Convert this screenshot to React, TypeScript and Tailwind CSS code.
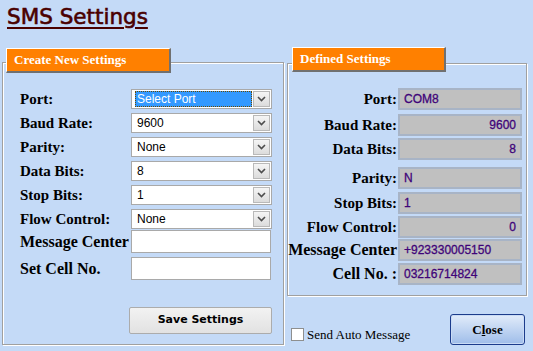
import React from 'react';

// SMS Settings dialog (WinForms style)

const serif = { fontFamily: '"Liberation Serif", "Times New Roman", serif' };
const sans = { fontFamily: '"Liberation Sans", Arial, sans-serif' };

function Chevron() {
  return (
    <svg width="9" height="6" viewBox="0 0 9 6">
      <polyline points="1,1 4.5,4.5 8,1" fill="none" stroke="#4d4d4d" strokeWidth="1.6" />
    </svg>
  );
}

function Select({ value, focused }: { value: string; focused?: boolean }) {
  return (
    <div className="flex h-[20px] w-[141px] items-center border border-[#a9a9a9] bg-white p-[1px]">
      <div className="flex h-full flex-1 items-center pr-[1px] pl-[2px]">
        {focused ? (
          <div className="flex h-full w-full items-center bg-[#3399ff] pl-[2px] text-white outline-1 outline-dotted outline-[#6b4a00] -outline-offset-1">
            {value}
          </div>
        ) : (
          <span className="pl-[2px] text-black">{value}</span>
        )}
      </div>
      <div className="flex h-[16px] w-[17px] items-center justify-center border border-[#b9b9b9] bg-gradient-to-b from-[#f5f5f5] to-[#dcdcdc]">
        <Chevron />
      </div>
    </div>
  );
}

function TextBox() {
  return <div className="h-[23px] w-[140px] border border-[#a9a9a9] bg-white" />;
}

function Tab({ label, className }: { label: string; className: string }) {
  return (
    <div
      className={`relative z-10 flex h-[25px] items-center border-t border-l border-white border-r-2 border-b-2 border-r-[#707070] border-b-[#707070] bg-[#ff8000] pl-[7px] text-[13px] font-bold text-white ${className}`}
      style={serif}
    >
      {label}
    </div>
  );
}

function Field({ value, right }: { value: string; right?: boolean }) {
  return (
    <div
      className={`flex h-[22px] w-[124px] items-center border-2 border-[#a8b4c6] bg-[#c0c0c0] px-[4px] text-[12px] text-[#3f0479] [-webkit-text-stroke:0.3px_#3f0479] ${right ? 'justify-end' : ''}`}
      style={sans}
    >
      {value}
    </div>
  );
}

export default function App() {
  const leftRows: [string, React.ReactNode][] = [
    ['Port:', <Select value="Select Port" focused />],
    ['Baud Rate:', <Select value="9600" />],
    ['Parity:', <Select value="None" />],
    ['Data Bits:', <Select value="8" />],
    ['Stop Bits:', <Select value="1" />],
    ['Flow Control:', <Select value="None" />],
  ];

  const rightRows: [string, string, boolean, string, boolean?][] = [
    ['Port:', 'COM8', false, 'mt-0'],
    ['Baud Rate:', '9600', true, 'mt-[4px]'],
    ['Data Bits:', '8', true, 'mt-[2px]'],
    ['Parity:', 'N', false, 'mt-[7px]'],
    ['Stop Bits:', '1', false, 'mt-[3px]'],
    ['Flow Control:', '0', true, 'mt-[2px]'],
    ['Message Center', '+923330005150', false, 'mt-[1px]', true],
    ['Cell No. :', '03216714824', false, 'mt-[2px]', true],
  ];

  return (
    <div className="h-[351px] w-[533px] overflow-hidden bg-[#c4daf7] text-[12px]" style={sans}>
      {/* Title */}
      <div className="h-[47px] pt-[3px] pl-[7px]">
        <span
          className="text-[21.5px] leading-[28px] text-[#4a0000] underline decoration-2 underline-offset-[3px] [-webkit-text-stroke:0.6px_#4a0000]"
          style={{ fontFamily: '"Comic Sans MS", "DejaVu Sans", sans-serif' }}
        >
          SMS Settings
        </span>
      </div>

      <div className="flex">
        {/* Create New Settings */}
        <div className="ml-[2px] flex w-[282px] flex-col">
          <Tab label="Create New Settings" className="mt-[1px] ml-[4px] w-[165px]" />
          <div className="-mt-[11px] flex h-[283px] flex-col border border-[#a0a0a0] pt-[26px] pl-[17px] shadow-[inset_1px_1px_0_#ffffff,1px_1px_0_#ffffff]">
            <div className="flex flex-col gap-[4px]">
              {leftRows.map(([label, control]) => (
                <div key={label} className="flex items-center">
                  <div className="w-[111px] text-[15px] leading-[18px] font-bold text-black" style={serif}>
                    {label}
                  </div>
                  {control}
                </div>
              ))}
            </div>
            <div className="mt-[1px] flex items-center">
              <div className="w-[111px] text-[16px] leading-[18px] font-bold" style={serif}>
                Message Center
              </div>
              <TextBox />
            </div>
            <div className="mt-[4px] flex items-center">
              <div className="w-[111px] text-[16px] leading-[18px] font-bold" style={serif}>
                Set Cell No.
              </div>
              <TextBox />
            </div>
            <div className="mt-[27px] ml-[109px]">
              <button
                className="flex h-[27px] w-[143px] items-center justify-center rounded-[2px] border border-[#acacac] bg-gradient-to-b from-[#f2f2f2] to-[#e2e2e2] text-[11px] font-bold text-black"
                style={{ fontFamily: '"Comic Sans MS", "DejaVu Sans", sans-serif' }}
              >
                Save Settings
              </button>
            </div>
          </div>
        </div>

        {/* Defined Settings */}
        <div className="ml-[3px] flex w-[240px] flex-col">
          <Tab label="Defined Settings" className="ml-[5px] w-[154px]" />
          <div className="-mt-[9px] flex h-[233px] flex-col border border-[#a0a0a0] pt-[24px] shadow-[inset_1px_1px_0_#ffffff,1px_1px_0_#ffffff]">
            {rightRows.map(([label, value, right, mt, big]) => (
              <div key={label} className={`flex items-center ${mt}`}>
                <div
                  className={`w-[110px] pr-[1px] text-right leading-[18px] font-bold whitespace-nowrap ${big ? 'text-[16px]' : 'text-[15px]'}`}
                  style={serif}
                >
                  {label}
                </div>
                <Field value={value} right={right} />
              </div>
            ))}
          </div>
          <div className="mt-[18px] flex items-end justify-between pr-[2px] pl-[4px]">
            <label className="mb-[1px] flex items-center gap-[3px] text-[13px] text-black" style={serif}>
              <span className="h-[13px] w-[13px] border border-[#8e8f8f] bg-white" />
              Send Auto Message
            </label>
            <button
              className="flex h-[31px] w-[75px] items-center justify-center rounded-[3px] border border-[#1c3c8c] bg-gradient-to-b from-[#e2ecfa] to-[#9fbde9] text-[13px] font-bold text-black shadow-[inset_0_0_0_1px_#c9dbf5]"
              style={serif}
            >
              C<span className="underline">l</span>ose
            </button>
          </div>
        </div>
      </div>
    </div>
  );
}
